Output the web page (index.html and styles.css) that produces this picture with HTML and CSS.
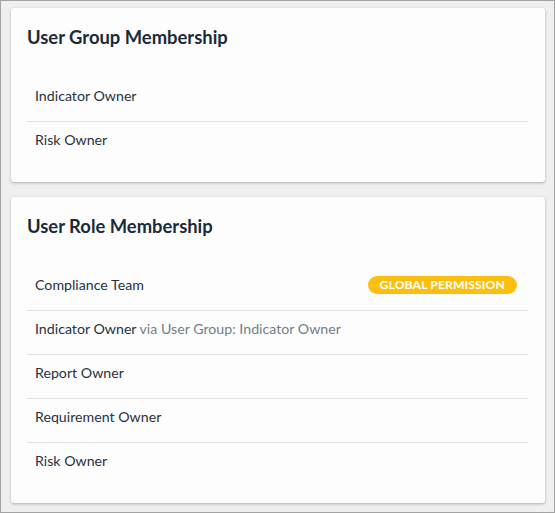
FILE: index.html
```html
<!DOCTYPE html>
<html lang="en">

<head>
    <meta charset="UTF-8">
    <meta name="viewport" content="width=device-width, initial-scale=1.0">
    <title>Membership</title>
    <link rel="stylesheet" href="styles.css">
</head>

<body>
    <div class="frame">
        <!-- Groups the user belongs to -->
        <section class="card">
            <h2 class="card-title">User Group Membership</h2>
            <ul class="member-list">
                <li class="member-row">Indicator Owner</li>
                <li class="member-row">Risk Owner</li>
            </ul>
        </section>

        <!-- Roles, direct or inherited -->
        <section class="card">
            <h2 class="card-title">User Role Membership</h2>
            <ul class="member-list">
                <li class="member-row">
                    <span>Compliance Team</span>
                    <span class="badge">Global Permission</span>
                </li>
                <li class="member-row">
                    <span>Indicator Owner <span class="via">via User Group: Indicator Owner</span></span>
                </li>
                <li class="member-row">Report Owner</li>
                <li class="member-row">Requirement Owner</li>
                <li class="member-row">Risk Owner</li>
            </ul>
        </section>
    </div>
</body>

</html>
```

FILE: styles.css
```css
/* Variables */
:root {
    --page-bg: #efefef;
    --frame-border: #a3a3a3;
    --card-bg: #fdfdfd;
    --title-color: #1b2a38;
    --text-color: #27323e;
    --muted-color: #737d88;
    --divider-color: #e2e2e2;
    --badge-color: #fdbf0f;
}

/* Global Styles */
html,
body {
    margin: 0;
    height: 100%;
}

body {
    font-family: "Lato", "Open Sans", sans-serif;
    color: var(--text-color);
    background: var(--page-bg);
}

.frame {
    box-sizing: border-box;
    height: 513px;
    border: 1px solid var(--frame-border);
    padding: 7px 9px 0 10px;
    display: flex;
    flex-direction: column;
    gap: 15px;
}

/* Card */
.card {
    background: var(--card-bg);
    border-radius: 3px;
    box-shadow: 0 1px 3px rgba(0, 0, 0, 0.28);
    padding: 17px 17px 17px 16px;
}

.card-title {
    margin: 0 0 29px 0;
    font-size: 18.4px;
    line-height: 24px;
    font-weight: 700;
    color: var(--title-color);
}

/* List rows */
.member-list {
    list-style: none;
    margin: 0;
    padding: 0;
}

.member-row {
    display: flex;
    align-items: center;
    justify-content: space-between;
    font-size: 14.2px;
    line-height: 20px;
    padding: 8px 11px 15px 8px;
    border-bottom: 1px solid var(--divider-color);
}

.member-row:last-child {
    border-bottom: none;
}

.via {
    color: var(--muted-color);
}

.badge {
    background: var(--badge-color);
    color: #fff;
    font-size: 12.2px;
    font-weight: 700;
    line-height: 18px;
    letter-spacing: 0.1px;
    text-transform: uppercase;
    padding: 0 12px;
    border-radius: 9px;
}
```
